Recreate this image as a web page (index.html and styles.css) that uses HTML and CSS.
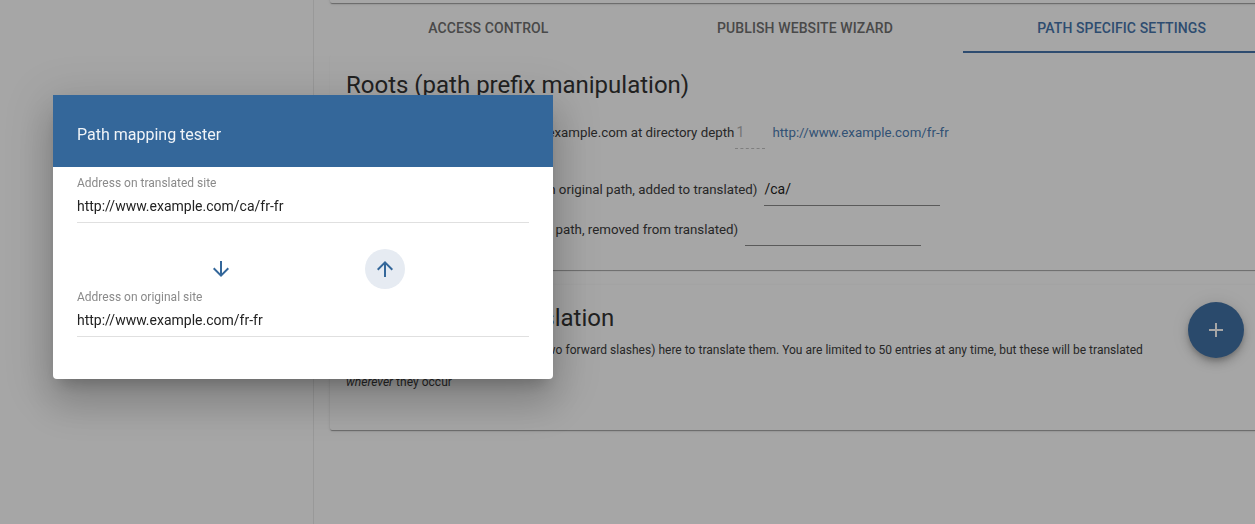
FILE: index.html
```html
<!DOCTYPE html>
<html>
<head>
<meta charset="utf-8">
<link rel="stylesheet" href="styles.css">
</head>
<body>
<div class="layout">
  <aside class="sidebar"></aside>
  <main class="main">
    <div class="card top-card"></div>
    <nav class="tabs">
      <div class="tab">Access control</div>
      <div class="tab">Publish website wizard</div>
      <div class="tab active">Path specific settings</div>
    </nav>
    <section class="card roots">
      <h2 class="card-title">Roots (path prefix manipulation)</h2>
      <div class="row row-1">
        <span class="row-text">Translated site is the root of www.example.com at directory depth</span>
        <span class="input depth">1</span>
        <a class="link">http://www.example.com/fr-fr</a>
      </div>
      <div class="row row-2">
        <span class="row-text">Path prefix to insert: (removed from original path, added to translated)</span>
        <span class="input wide">/ca/</span>
      </div>
      <div class="row row-3">
        <span class="row-text">Prefix to remove: (added to original path, removed from translated)</span>
        <span class="input wide"></span>
      </div>
    </section>
    <section class="card strings">
      <div class="strings-body">
        <h2 class="card-title">General string translation</h2>
        <p class="strings-text">Enter any strings (which can contain two forward slashes) here to translate them. You are limited to 50 entries at any time, but these will be translated <em>wherever</em> they occur</p>
      </div>
      <button class="fab" aria-label="Add">
        <svg viewBox="0 0 24 24" width="24" height="24"><path d="M19 13h-6v6h-2v-6H5v-2h6V5h2v6h6v2z" fill="#fff"/></svg>
      </button>
    </section>
  </main>
</div>
<div class="backdrop"></div>
<div class="dialog">
  <header class="dialog-header">Path mapping tester</header>
  <div class="dialog-body">
    <div class="field">
      <div class="field-label">Address on translated site</div>
      <div class="field-value">http://www.example.com/ca/fr-fr</div>
    </div>
    <div class="arrows">
      <span class="arrow-btn">
        <svg viewBox="0 0 24 24" width="24" height="24"><path d="M20 12l-1.41-1.41L13 16.17V4h-2v12.17l-5.58-5.59L4 12l8 8 8-8z" fill="#34679a"/></svg>
      </span>
      <span class="arrow-btn selected">
        <svg viewBox="0 0 24 24" width="24" height="24"><path d="M4 12l1.41 1.41L11 7.83V20h2V7.83l5.58 5.59L20 12l-8-8-8 8z" fill="#34679a"/></svg>
      </span>
    </div>
    <div class="field">
      <div class="field-label">Address on original site</div>
      <div class="field-value">http://www.example.com/fr-fr</div>
    </div>
  </div>
</div>
</body>
</html>
```
FILE: styles.css
```css
html, body {
  margin: 0;
  padding: 0;
  overflow: hidden;
  height: 100%;
}
body {
  font-family: Roboto, "Noto Sans", sans-serif;
  background: #fff;
  color: #333;
}
.layout {
  display: flex;
  width: 1300px;
  min-height: 524px;
}
.sidebar {
  width: 313px;
  flex: none;
  border-right: 1px solid #ebebeb;
}
.main {
  width: 950px;
  flex: none;
  padding: 0 16px;
}
.card {
  background: #fff;
  border-radius: 2px;
  box-shadow: 0 2px 1px -1px rgba(0,0,0,.2), 0 1px 1px 0 rgba(0,0,0,.14), 0 1px 3px 0 rgba(0,0,0,.12);
}
.top-card {
  margin-top: -40px;
  height: 43px;
}
.tabs {
  display: flex;
  height: 49px;
  margin-top: 1px;
}
.tab {
  flex: 1;
  display: flex;
  align-items: center;
  justify-content: center;
  text-transform: uppercase;
  font-size: 14px;
  font-weight: 500;
  color: #707070;
  letter-spacing: 0.1px;
  box-sizing: border-box;
  padding-bottom: 2px;
}
.tab.active {
  color: #4776ac;
  border-bottom: 2px solid #4776ac;
  padding-bottom: 0;
}
.roots {
  margin-top: 2px;
  padding: 16px 16px 24px;
  box-shadow: 0 2px 1px -1px rgba(0,0,0,.25), 0 1px 1px 0 rgba(0,0,0,.14);
}
.card-title {
  margin: 0;
  font-size: 24px;
  font-weight: 400;
  line-height: 28px;
  color: #333;
}
.row {
  display: flex;
  align-items: center;
  font-size: 13.3px;
  color: #3c3c3c;
}
.row-1 { margin-top: 17px; }
.row-2 { margin-top: 24px; }
.row-3 { margin-top: 7px; }
.row-text {
  white-space: nowrap;
}
.input {
  box-sizing: border-box;
  height: 33px;
  display: flex;
  align-items: center;
  font-size: 14px;
  color: #222;
  border-bottom: 1px solid #8a8a8a;
}
.depth {
  width: 30px;
  margin-left: 1px;
  color: #b4b4b4;
  border-bottom: 1px dashed #c4c4c4;
  padding-left: 1px;
}
.link {
  margin-left: 7px;
  color: #4d7db3;
}
.wide {
  width: 176px;
  margin-left: 7px;
}
.strings {
  position: relative;
  margin-top: 15px;
  padding: 19px 16px 32px;
}
.strings-body {
  padding-right: 96px;
}
.strings .card-title {
  margin-bottom: 2px;
}
.strings-text {
  margin: 0;
  font-size: 12px;
  letter-spacing: 0.02px;
  line-height: 32px;
  color: #3c3c3c;
}
.fab {
  position: absolute;
  top: 17px;
  right: 36px;
  width: 56px;
  height: 56px;
  border-radius: 50%;
  border: none;
  padding: 0;
  background: #4172a6;
  display: flex;
  align-items: center;
  justify-content: center;
  box-shadow: 0 3px 5px -1px rgba(0,0,0,.2), 0 6px 10px 0 rgba(0,0,0,.14), 0 1px 18px 0 rgba(0,0,0,.12);
}
.backdrop {
  position: fixed;
  inset: 0;
  background: rgba(0,0,0,.35);
}
.dialog {
  position: absolute;
  left: 53px;
  top: 95px;
  width: 500px;
  height: 284px;
  background: #fff;
  border-radius: 0 0 4px 4px;
  overflow: hidden;
  box-shadow: 0 11px 15px -7px rgba(0,0,0,.2), 0 24px 38px 3px rgba(0,0,0,.14), 0 9px 46px 8px rgba(0,0,0,.12);
}
.dialog-header {
  height: 72px;
  box-sizing: border-box;
  background: #34679a;
  color: rgba(255,255,255,.92);
  font-size: 16px;
  line-height: 24px;
  padding: 28px 24px 0;
}
.dialog-body {
  padding: 8px 24px 0;
}
.field {
  border-bottom: 1px solid #e0e0e0;
  padding-bottom: 8px;
}
.field-label {
  font-size: 12px;
  line-height: 16px;
  color: #8a8a8a;
}
.field-value {
  font-size: 14px;
  line-height: 16px;
  margin-top: 7px;
  color: #222;
}
.arrows {
  display: flex;
  justify-content: center;
  gap: 124px;
  margin-top: 26px;
}
.arrow-btn {
  width: 40px;
  height: 40px;
  border-radius: 50%;
  display: flex;
  align-items: center;
  justify-content: center;
}
.arrow-btn.selected {
  background: #e6ebf2;
}
```
